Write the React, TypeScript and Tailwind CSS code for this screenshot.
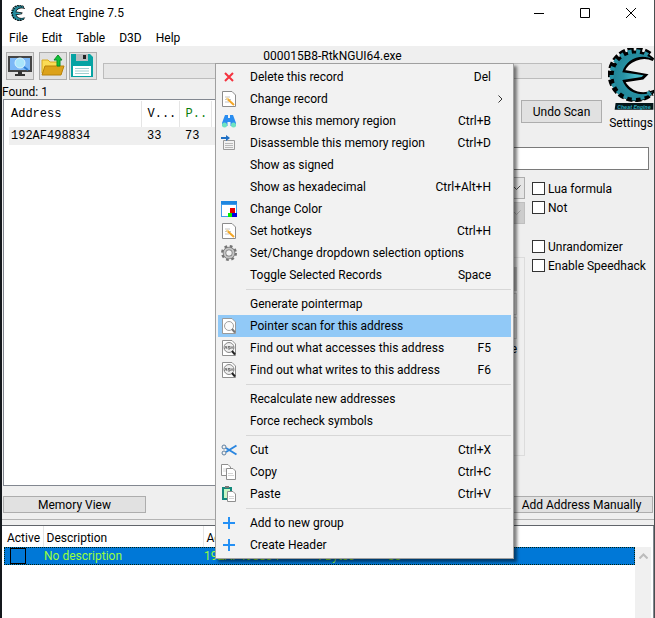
import type { ReactNode } from "react";

type Item = {
    label: string;
    keys?: string;
    icon?: ReactNode;
    sub?: boolean;
    active?: boolean;
};

/* ---------- icons ---------- */

function GearE({ className }: { className: string }) {
    return (
        <svg viewBox="0 0 46 56" className={className} fill="none">
            <defs>
                <radialGradient id="teal" cx="0.6" cy="0.5" r="0.7">
                    <stop offset="0" stopColor="#4fc0cf" />
                    <stop offset="0.5" stopColor="#2793a5" />
                    <stop offset="1" stopColor="#1f7f91" />
                </radialGradient>
            </defs>
            <path d="M42 7A25 25 0 1 0 44 46" stroke="#000" strokeWidth="7" strokeDasharray="6 2.500" />
            <path d="M46 12C36 2 20 1 11 11C0 23 1 39 13 48C23 56 38 55 46 45C36 49 22 48 15 34L35 31L38 28L15 24C19 12 35 7 46 12Z" fill="#000" stroke="#000" strokeWidth="3" />
            <path d="M41 8A24 24 0 1 0 43 46" stroke="#2793a5" strokeWidth="5" strokeDasharray="4 4.500" strokeDashoffset="-1" />
            <path d="M46 12C36 4 21 3 12 12C2 23 3 38 14 47C23 54 37 53 46 45C34 51 19 47 14 33L34 30L36 28L14 25C18 11 34 5 46 12Z" fill="url(#teal)" />
        </svg>
    );
}

const DeleteIcon = (
    <svg width="16" height="16" viewBox="0 0 16 16" stroke="#f5333f" strokeWidth="2">
        <path d="M4 4L12 12M12 4L4 12" />
    </svg>
);

const EditIcon = (
    <svg width="16" height="16" viewBox="0 0 16 16" fill="none">
        <path d="M1.500 0.500H11L14.500 4V15.500H1.500Z" fill="#fff" stroke="#8c8c8c" />
        <path d="M4 6H9M4 8.500H10M4 11H8" stroke="#c4c4c4" />
        <path d="M6.500 8L13 14" stroke="#f5a623" strokeWidth="2" />
        <path d="M5.500 7L7 8.500" stroke="#f6d58c" strokeWidth="2" />
    </svg>
);

const BinocularsIcon = (
    <svg width="16" height="16" viewBox="0 0 16 16">
        <path d="M4 2H7V5H9V2H12L15 10V13H9.500V9H6.500V13H1V10Z" fill="#2a8df0" />
        <circle cx="3.500" cy="12" r="2.500" fill="#6fe3c1" />
        <circle cx="12.500" cy="12" r="2.500" fill="#6fe3c1" />
    </svg>
);

const DisassembleIcon = (
    <svg width="16" height="16" viewBox="0 0 16 16" fill="none">
        <path d="M2.500 5.500H13.500V14.500H2.500Z" fill="#f2f2f2" stroke="#9a9a9a" />
        <path d="M4 8.500H12M4 10.500H12M4 12.500H12" stroke="#b9b9b9" />
        <path d="M0 3H7" stroke="#1f6fc4" strokeWidth="2" />
        <path d="M5 0L9 3L5 6Z" fill="#1f6fc4" />
    </svg>
);

const ColorIcon = (
    <svg width="16" height="16" viewBox="0 0 16 16" shapeRendering="crispEdges">
        <path d="M0 0H16V16H0Z" fill="#3f9bea" />
        <path d="M0 0H16V3H0Z" fill="#1d86e0" />
        <path d="M1 4H15V15H1Z" fill="#fff" />
        <path d="M9 7H14V12H9Z" fill="#e60000" />
        <path d="M7 12H11V16H7Z" fill="#0e0" />
        <path d="M11 12H16V16H11Z" fill="#00d" />
    </svg>
);

const CogIcon = (
    <svg width="16" height="16" viewBox="0 0 16 16" fill="none">
        <circle cx="8" cy="8" r="6.500" stroke="#757575" strokeWidth="3" strokeDasharray="2.600 2.500" />
        <circle cx="8" cy="8" r="4.500" fill="#f2f2f2" stroke="#757575" strokeWidth="3.500" />
        <circle cx="8" cy="8" r="4.500" stroke="#c4c4c4" strokeWidth="2" />
    </svg>
);

const ScanIcon = (
    <svg width="16" height="16" viewBox="0 0 16 16" fill="none">
        <path d="M1.500 0.500H11L14.500 4V15.500H1.500Z" fill="#fff" stroke="#9a9a9a" />
        <circle cx="8" cy="8" r="4.500" fill="#fbfbfb" stroke="#a0a0a0" />
        <path d="M11 11L14 14.500" stroke="#777" strokeWidth="2" />
    </svg>
);

const AsmIcon = (
    <svg width="16" height="16" viewBox="0 0 16 16" fill="none">
        <path d="M1.500 0.500H11L14.500 4V15.500H1.500Z" fill="#fff" stroke="#8f8f8f" />
        <circle cx="8" cy="7.500" r="5" fill="#eee" stroke="#888" />
        <path d="M3.500 9L5 6L6 9M9 6.500H7V7.500L9 8V9H7M10 9V6.500L11 7.500L12 6.500V9" stroke="#777" />
        <path d="M11 11L14 14.500" stroke="#222" strokeWidth="2" />
    </svg>
);

const CutIcon = (
    <svg width="16" height="16" viewBox="0 0 16 16" fill="none">
        <path d="M5 6L15.500 12.500M5 10L15.500 3.500" stroke="#2a86e0" strokeWidth="2" />
        <circle cx="3" cy="5" r="2" stroke="#5f7f9f" />
        <circle cx="3" cy="11" r="2" stroke="#5f7f9f" />
    </svg>
);

const CopyIcon = (
    <svg width="16" height="16" viewBox="0 0 16 16" fill="none">
        <path d="M0.500 0.500H7L9.500 3V11.500H0.500Z" fill="#fff" stroke="#8f8f8f" />
        <path d="M2 5H7M2 7H7" stroke="#d5d5d5" />
        <path d="M5.500 4.500H12L14.500 7V15.500H5.500Z" fill="#fff" stroke="#8f8f8f" />
        <path d="M7 9.500H12M7 11.500H13" stroke="#d5d5d5" />
    </svg>
);

const PasteIcon = (
    <svg width="16" height="16" viewBox="0 0 16 16" fill="none">
        <path d="M2 2H10V13H2Z" fill="#c9f7c5" stroke="#12897b" strokeWidth="2" />
        <path d="M4 0H8V2H4Z" fill="#777" />
        <path d="M6.500 5.500H12L14.500 8V15.500H6.500Z" fill="#fff" stroke="#8f8f8f" />
        <path d="M8 10.500H13M8 12.500H13" stroke="#d5d5d5" />
    </svg>
);

const PlusIcon = (
    <svg width="16" height="16" viewBox="0 0 16 16" stroke="#2490f5" strokeWidth="2">
        <path d="M8 2V14M2 8H14" />
    </svg>
);

function Chevron({ className }: { className: string }) {
    return (
        <svg width="9" height="6" viewBox="0 0 9 6" fill="none" stroke="currentColor" className={className}>
            <path d="M0.500 0.500L4.500 4.500L8.500 0.500" />
        </svg>
    );
}

/* ---------- data ---------- */

const groups: Item[][] = [
    [
        { label: "Delete this record", keys: "Del", icon: DeleteIcon },
        { label: "Change record", icon: EditIcon, sub: true },
        { label: "Browse this memory region", keys: "Ctrl+B", icon: BinocularsIcon },
        { label: "Disassemble this memory region", keys: "Ctrl+D", icon: DisassembleIcon },
        { label: "Show as signed" },
        { label: "Show as hexadecimal", keys: "Ctrl+Alt+H" },
        { label: "Change Color", icon: ColorIcon },
        { label: "Set hotkeys", keys: "Ctrl+H", icon: EditIcon },
        { label: "Set/Change dropdown selection options", icon: CogIcon },
        { label: "Toggle Selected Records", keys: "Space" },
    ],
    [
        { label: "Generate pointermap" },
        { label: "Pointer scan for this address", icon: ScanIcon, active: true },
        { label: "Find out what accesses this address", keys: "F5", icon: AsmIcon },
        { label: "Find out what writes to this address", keys: "F6", icon: AsmIcon },
    ],
    [{ label: "Recalculate new addresses" }, { label: "Force recheck symbols" }],
    [
        { label: "Cut", keys: "Ctrl+X", icon: CutIcon },
        { label: "Copy", keys: "Ctrl+C", icon: CopyIcon },
        { label: "Paste", keys: "Ctrl+V", icon: PasteIcon },
    ],
    [
        { label: "Add to new group", icon: PlusIcon },
        { label: "Create Header", icon: PlusIcon },
    ],
];

/* ---------- parts ---------- */

function TitleBar() {
    return (
        <header className="flex h-[26px] items-center bg-white pl-2">
            <GearE className="h-4 w-4" />
            <h1 className="flex-1 pl-2">Cheat Engine 7.5</h1>
            <div className="flex gap-9 pr-[18px]">
                <button aria-label="Minimize">
                    <svg width="10" height="10" stroke="#000"><path d="M0 5.500H10" /></svg>
                </button>
                <button aria-label="Maximize">
                    <svg width="10" height="10" stroke="#000" fill="none"><path d="M0.500 0.500H9.500V9.500H0.500Z" /></svg>
                </button>
                <button aria-label="Close">
                    <svg width="10" height="10" stroke="#000"><path d="M0 0L10 10M10 0L0 10" /></svg>
                </button>
            </div>
        </header>
    );
}

function Toolbar() {
    return (
        <div className="col-span-2 flex pl-1">
            <div className="flex items-start pt-1.5">
                <button aria-label="Open process" className="mr-[5px] h-7 w-7 border border-[#adadad] bg-[#e1e1e1]">
                    <svg viewBox="0 0 26 26" fill="none">
                        <path d="M2 4H24V18H2Z" fill="#7cb8f7" stroke="#444" strokeWidth="2" />
                        <path d="M11 18H15V21H18V23H8V21H11Z" fill="#333" />
                        <circle cx="13" cy="10" r="5" fill="#a8e4fb" stroke="#d8f3fd" />
                        <path d="M17 14L21 17" stroke="#2f7fd6" strokeWidth="2" />
                    </svg>
                </button>
                <button aria-label="Load" className="mr-0.5 h-7 w-7 border border-[#adadad] bg-[#e1e1e1]">
                    <svg viewBox="0 0 26 26" fill="none">
                        <path d="M2 7H8L10 9H19V20H2Z" fill="#fbdc55" stroke="#d8a820" />
                        <path d="M5 13H24L21 22H2Z" fill="#dca21a" stroke="#b8820a" />
                        <path d="M17 13V7H14L18 2L22 7H20V13Z" fill="#12c23a" stroke="#0a8f28" />
                    </svg>
                </button>
                <button aria-label="Save" className="h-7 w-7 border border-[#adadad] bg-[#e1e1e1]">
                    <svg viewBox="0 0 26 26">
                        <path d="M1 1H20L23 4V24H1Z" fill="#07a3a3" />
                        <path d="M6 1H18V8H6Z" fill="#b9bcbe" />
                        <path d="M13 2H16V6H13Z" fill="#222" />
                        <path d="M3 13H21V23H3Z" fill="#fff" />
                        <path d="M5 15.500H19M5 18H19M5 20.500H19" stroke="#9ecfd0" />
                    </svg>
                </button>
            </div>
            <div className="flex flex-1 flex-col pl-1.5 pr-[3px]">
                <p className="h-[17px] pr-10 pt-0.5 text-center leading-4">000015B8-RtkNGUI64.exe</p>
                <div className="h-4 border border-[#bcbcbc] bg-[#e6e6e6]" />
            </div>
        </div>
    );
}

function FoundList() {
    return (
        <section className="row-span-2 flex flex-col">
            <p className="h-[15px] leading-4">Found: 1</p>
            <div className="ml-px h-[387px] border border-[#828790] bg-white pl-[5px] pt-px font-['Liberation_Mono',monospace] text-[12px]">
                <table className="w-full table-fixed border-collapse text-left">
                    <thead>
                        <tr className="h-[26px]">
                            <th className="w-[132px] border-r border-[#e5e5e5] pl-0.5 font-normal">Address</th>
                            <th className="w-[38px] border-r border-[#e5e5e5] pl-1.5 font-normal">V...</th>
                            <th className="w-8 border-r border-[#e5e5e5] pl-1.5 font-normal text-[#0a7d0a]">P..</th>
                            <th />
                        </tr>
                    </thead>
                    <tbody>
                        <tr className="h-[18px] bg-[#efefef]">
                            <td className="pl-0.5">192AF498834</td>
                            <td className="pl-1.5">33</td>
                            <td className="pl-1.5">73</td>
                            <td />
                        </tr>
                    </tbody>
                </table>
            </div>
        </section>
    );
}

function Check({ label }: { label: string }) {
    return (
        <label className="flex h-[19px] items-center gap-[3px] whitespace-nowrap">
            <input type="checkbox" className="h-[13px] w-[13px] appearance-none border border-[#333] bg-white" />
            {label}
        </label>
    );
}

function ScanPanel() {
    return (
        <section className="col-span-2 pt-4">
            <input aria-label="Value" className="block h-[23px] w-[calc(100%-5px)] border border-[#7a7a7a] bg-white px-1" />
            <div className="flex pt-[7px]">
                <div className="flex-1">
                    <div className="relative mb-[3px]">
                        <select aria-label="Scan type" className="block h-[22px] w-full appearance-none border border-[#adadad] bg-[#e5e5e5]" />
                        <Chevron className="absolute right-1 top-2 text-[#444]" />
                    </div>
                    <div className="relative mb-[33px]">
                        <select aria-label="Value type" disabled className="block h-[22px] w-full appearance-none border border-[#bfbfbf] bg-[#ccc] opacity-100" />
                        <Chevron className="absolute right-1 top-2 text-[#a0a0a0]" />
                    </div>
                    <fieldset className="flex h-[199px] flex-col gap-0.5 border border-[#dcdcdc] pl-2 pr-[7px] pt-[9px]">
                        <div className="h-6 bg-[#c4c4c4]" />
                        <div className="h-[22px] border border-[#ccc]" />
                        <div className="h-[22px] border border-[#ccc]" />
                        <p className="text-right">e</p>
                    </fieldset>
                </div>
                <div className="w-[129px] pl-[7px] pt-0.5">
                    <Check label="Lua formula" />
                    <Check label="Not" />
                    <div className="h-5" />
                    <Check label="Unrandomizer" />
                    <Check label="Enable Speedhack" />
                </div>
            </div>
        </section>
    );
}

function AddressTable() {
    return (
        <div className="flex min-h-0 flex-1 border-r border-[#828790] bg-white px-0.5">
            <table className="w-full table-fixed border-collapse self-start text-left">
                <thead>
                    <tr className="h-[21px]">
                        <th className="w-[39px] border-r border-[#e5e5e5] pl-[3px] pt-0.5 font-normal">Active</th>
                        <th className="w-[160px] border-r border-[#e5e5e5] pl-[3px] pt-0.5 font-normal">Description</th>
                        <th className="w-28 pl-[3px] pt-0.5 font-normal">Address</th>
                        <th className="w-[73px]" />
                        <th />
                    </tr>
                </thead>
                <tbody>
                    <tr className="h-[18px] bg-[#0078d7] text-[#9aff3c] outline-1 -outline-offset-1 outline-dotted outline-[#021]">
                        <td className="pl-1.5">
                            <input type="checkbox" aria-label="Active" className="block h-4 w-4 appearance-none border border-black" />
                        </td>
                        <td className="pl-px leading-4">No description</td>
                        <td className="pl-px leading-4">192AF498834</td>
                        <td className="leading-4">4 Bytes</td>
                        <td className="leading-4">33</td>
                    </tr>
                </tbody>
            </table>
            <div className="mt-[21px] w-4 shrink-0 bg-[#f0f0f0] pt-1.5">
                <Chevron className="mx-auto rotate-180 stroke-2 text-[#bcbcbc]" />
            </div>
        </div>
    );
}

function ContextMenu() {
    return (
        <div role="menu" className="absolute left-[213px] top-[63px] w-[299px] border border-[#a0a0a0] bg-[#f2f2f2] p-0.5 shadow-[3px_3px_3px_rgba(0,0,0,0.5)]">
            {groups.map((items, i) => (
                <div key={i}>
                    {i > 0 && <hr className="my-[3px] ml-7 border-[#d7d7d7]" />}
                    {items.map((item) => (
                        <button
                            key={item.label}
                            role="menuitem"
                            className={
                                item.active
                                    ? "flex h-[22px] w-full items-center bg-[#91c9f7] pl-[3px] pr-5 text-left"
                                    : "flex h-[22px] w-full items-center pl-[3px] pr-5 text-left"
                            }
                        >
                            <span className="mr-[13px] h-4 w-4">{item.icon}</span>
                            <span className="flex-1 whitespace-nowrap">{item.label}</span>
                            {item.keys}
                            {item.sub && (
                                <svg width="5" height="8" viewBox="0 0 5 8" fill="none" stroke="#333" className="-mr-3">
                                    <path d="M0.500 0.500L4 4L0.500 7.500" />
                                </svg>
                            )}
                        </button>
                    ))}
                </div>
            ))}
        </div>
    );
}

export default function App() {
    return (
        <div className="relative flex min-h-screen flex-col overflow-hidden border-l-2 border-r border-l-[#14181c] border-r-[#4a4f50] bg-[#efefef] font-[Roboto,sans-serif] text-[12px] leading-4 text-black">
            <TitleBar />
            <nav className="flex h-5 items-center gap-3.5 bg-white pl-[7px] pt-1">
                <button>File</button>
                <button>Edit</button>
                <button>Table</button>
                <button>D3D</button>
                <button>Help</button>
            </nav>

            <div className="grid grid-cols-[300px_1fr_49px] grid-rows-[38px_47px_365px]">
                <Toolbar />
                <div className="row-span-2 flex flex-col items-end pt-0.5">
                    <GearE className="h-14 w-[46px]" />
                    <svg width="40" height="9" viewBox="0 0 40 9">
                        <path d="M1 1H40V8H0Z" fill="#04161a" />
                        <text x="20" y="7" textAnchor="middle" fontSize="6" fontStyle="italic" fontWeight="bold" fill="#2aa3b5">Cheat Engine</text>
                    </svg>
                    <button className="mt-1 pr-px leading-4">Settings</button>
                </div>
                <FoundList />
                <div className="flex items-start justify-end pr-[3px] pt-4">
                    <button className="h-[23px] w-[81px] border border-[#adadad] bg-[#e1e1e1]">Undo Scan</button>
                </div>
                <ScanPanel />
            </div>

            <div className="flex justify-between pl-px pr-px">
                <button className="h-[17px] w-[143px] border border-[#adadad] bg-[#e1e1e1] leading-4">Memory View</button>
                <button className="h-[17px] w-[143px] border border-[#adadad] bg-[#e1e1e1] leading-4">Add Address Manually</button>
            </div>
            <div className="mt-1.5 h-[7px] border-b border-t border-b-[#60646a] border-t-[#b4b4b4]" />
            <AddressTable />

            <ContextMenu />
        </div>
    );
}
